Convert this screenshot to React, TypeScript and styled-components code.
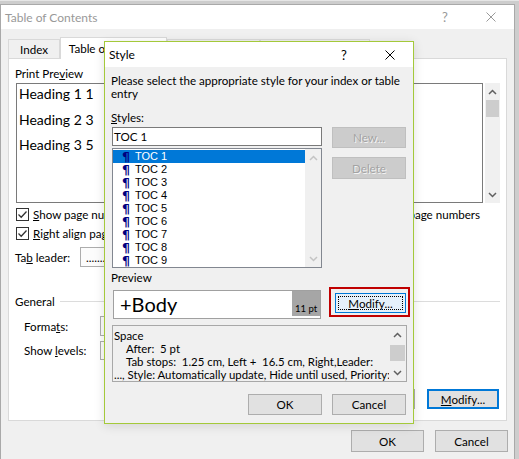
import React from "react";
import styled, { createGlobalStyle } from "styled-components";

const UI = `Lato, "Noto Sans", sans-serif`;

const GlobalStyle = createGlobalStyle`
  html, body { margin: 0; padding: 0; }
  body {
    font-family: ${UI};
    font-size: 11.6px;
    color: #000;
    background: #cfcfcf;
  }
  u { text-decoration-thickness: 1px; text-underline-offset: 1px; }
`;

const Desktop = styled.div`
  position: relative;
  width: 519px;
  height: 459px;
  overflow: hidden;
  padding-top: 3px;
  box-sizing: border-box;
  background: #cdcdcd;
  border-top: 1px solid #e6e6e6;
`;

const Window = styled.div`
  width: 515px;
  height: 470px;
  box-sizing: border-box;
  border: 1px solid #a9a9a9;
  background: #f0f0f0;
  display: flex;
  flex-direction: column;
`;

const TitleBar = styled.div<{ $h: number }>`
  height: ${(p) => p.$h}px;
  flex-shrink: 0;
  background: #fff;
  display: flex;
  align-items: center;
`;

const TitleText = styled.div<{ $inactive?: boolean }>`
  flex: 1;
  padding-left: 4px;
  font-size: 12px;
  color: ${(p) => (p.$inactive ? "#999" : "#000")};
`;

const CaptionButton = styled.div<{ $inactive?: boolean }>`
  width: 46px;
  height: 100%;
  display: flex;
  align-items: center;
  justify-content: center;
  font-size: 13px;
  color: ${(p) => (p.$inactive ? "#999" : "#000")};
`;

const Body = styled.div`
  padding: 0 7px;
  display: flex;
  flex-direction: column;
`;

const TabStrip = styled.div`
  height: 29px;
  display: flex;
  align-items: flex-end;
`;

const Tab = styled.div<{ $selected?: boolean; $w: number }>`
  width: ${(p) => p.$w}px;
  height: ${(p) => (p.$selected ? 22 : 19)}px;
  box-sizing: border-box;
  border: 1px solid #d9d9d9;
  border-bottom: none;
  background: ${(p) => (p.$selected ? "#fff" : "#f0f0f0")};
  margin-bottom: ${(p) => (p.$selected ? -1 : 0)}px;
  position: relative;
  z-index: ${(p) => (p.$selected ? 1 : 0)};
  display: flex;
  align-items: center;
  justify-content: center;
  white-space: nowrap;
`;

const TabPanel = styled.div`
  height: 363px;
  box-sizing: border-box;
  background: #fff;
  border: 1px solid #d9d9d9;
  padding: 8px 6px 0 6px;
  display: flex;
  flex-direction: column;
`;

const PanelGrid = styled.div`
  display: grid;
  grid-template-columns: 236px 238px;
  column-gap: 11px;
`;

const Column = styled.div`
  display: flex;
  flex-direction: column;
`;

const Label = styled.div<{ $mt?: number; $ml?: number }>`
  line-height: 14px;
  height: 14px;
  white-space: nowrap;
  margin-top: ${(p) => p.$mt ?? 0}px;
  margin-left: ${(p) => p.$ml ?? 0}px;
`;

const PreviewFrame = styled.div`
  margin-top: 2px;
  margin-left: 1px;
  height: 120px;
  display: flex;
  gap: 2px;
`;

const PreviewBox = styled.div`
  flex: 1;
  border: 1px solid #7a7a7a;
  background: #fff;
  padding: 1px 0 0 2px;
  display: flex;
  flex-direction: column;
  gap: 8.5px;
`;

const HeadingLine = styled.div`
  font-family: Lato, "Open Sans", sans-serif;
  font-size: 14px;
  line-height: 17px;
  white-space: nowrap;
`;

const Track = styled.div<{ $w: number }>`
  width: ${(p) => p.$w}px;
  flex-shrink: 0;
  background: #f0f0f0;
  display: flex;
  flex-direction: column;
`;

const ArrowCell = styled.div`
  height: 17px;
  display: flex;
  align-items: center;
  justify-content: center;
`;

const Thumb = styled.div<{ $h: number; $mt: number }>`
  height: ${(p) => p.$h}px;
  margin-top: ${(p) => p.$mt}px;
  margin-left: 1px;
  margin-right: 1px;
  background: #cdcdcd;
`;

const TrackFill = styled.div`
  flex: 1;
  display: flex;
  flex-direction: column;
`;

const Chevron = ({ dir, color }: { dir: "up" | "down"; color: string }) => (
  <svg width="9" height="6" viewBox="0 0 9 6">
    <polyline
      points={dir === "up" ? "1,5 4.5,1.5 8,5" : "1,1 4.5,4.5 8,1"}
      fill="none"
      stroke={color}
      strokeWidth="1.5"
    />
  </svg>
);

const ScrollBar = ({
  w,
  thumb,
  disabled,
}: {
  w: number;
  thumb?: { top: number; h: number };
  disabled?: boolean;
}) => {
  const c = disabled ? "#c4c4c4" : "#606060";
  return (
    <Track $w={w}>
      <ArrowCell>
        <Chevron dir="up" color={c} />
      </ArrowCell>
      <TrackFill>{thumb && <Thumb $h={thumb.h} $mt={thumb.top} />}</TrackFill>
      <ArrowCell>
        <Chevron dir="down" color={c} />
      </ArrowCell>
    </Track>
  );
};

const CheckRow = styled.div<{ $mt: number; $end?: boolean }>`
  display: flex;
  align-items: center;
  gap: 4px;
  height: 13px;
  line-height: 13px;
  margin-top: ${(p) => p.$mt}px;
  margin-left: 1px;
  justify-content: ${(p) => (p.$end ? "flex-end" : "flex-start")};
  padding-right: ${(p) => (p.$end ? 20 : 0)}px;
  white-space: nowrap;
`;

const CheckBox = styled.span`
  width: 13px;
  height: 13px;
  box-sizing: border-box;
  border: 1px solid #333;
  background: #fff;
  display: inline-flex;
  align-items: center;
  justify-content: center;
  flex-shrink: 0;
`;

const Checked = () => (
  <CheckBox>
    <svg width="11" height="11" viewBox="0 0 11 11">
      <polyline points="1.5,5.5 4.2,8.2 9.5,2.5" fill="none" stroke="#333" strokeWidth="1.3" />
    </svg>
  </CheckBox>
);

const FieldRow = styled.div<{ $mt: number; $indent?: number; $h?: number }>`
  display: flex;
  align-items: center;
  margin-top: ${(p) => p.$mt}px;
  margin-left: ${(p) => p.$indent ?? 0}px;
  height: ${(p) => p.$h ?? 20}px;
  white-space: nowrap;
`;

const FieldLabel = styled.div<{ $w: number }>`
  width: ${(p) => p.$w}px;
  flex-shrink: 0;
`;

const SelectBox = styled.div<{ $w: number }>`
  width: ${(p) => p.$w}px;
  height: 100%;
  box-sizing: border-box;
  border: 1px solid #adadad;
  background: #fcfcfc;
  display: flex;
  align-items: center;
  justify-content: space-between;
  padding: 0 5px;
`;

const GroupHeader = styled.div`
  display: flex;
  align-items: center;
  gap: 5px;
  margin-top: 27px;
  height: 14px;
`;

const GroupRule = styled.div`
  flex: 1;
  height: 1px;
  background: #dcdcdc;
`;

const ButtonRow = styled.div<{ $mt: number; $gap: number; $mr?: number }>`
  display: flex;
  justify-content: flex-end;
  gap: ${(p) => p.$gap}px;
  margin-top: ${(p) => p.$mt}px;
  margin-right: ${(p) => p.$mr ?? 0}px;
`;

const Button = styled.div<{
  $w: number;
  $h: number;
  $variant?: "default" | "disabled" | "focused" | "hot";
}>`
  width: ${(p) => p.$w}px;
  height: ${(p) => p.$h}px;
  box-sizing: border-box;
  flex-shrink: 0;
  display: flex;
  align-items: center;
  justify-content: center;
  position: relative;
  white-space: nowrap;
  background: ${(p) =>
    p.$variant === "disabled" ? "#cccccc" : p.$variant === "hot" ? "#e5f1fb" : "#e1e1e1"};
  border: ${(p) =>
    p.$variant === "focused"
      ? "2px solid #0078d7"
      : p.$variant === "hot"
      ? "1px solid #0078d7"
      : p.$variant === "disabled"
      ? "1px solid #bfbfbf"
      : "1px solid #adadad"};
  color: ${(p) => (p.$variant === "disabled" ? "#a3a3a3" : "#000")};
  text-shadow: ${(p) => (p.$variant === "disabled" ? "1px 1px 0 #f4f4f4" : "none")};
`;

const FocusRing = styled.span`
  position: absolute;
  inset: 2px;
  border: 1px dotted #000;
`;

const Annotation = styled.span`
  position: absolute;
  left: -7px;
  top: -7px;
  right: -5px;
  bottom: -5px;
  border: 2px solid #c00000;
  pointer-events: none;
`;

/* ---------- Style dialog ---------- */

const StyleWindow = styled.div`
  position: absolute;
  z-index: 10;
  left: 104px;
  top: 40px;
  width: 310px;
  height: 383px;
  box-sizing: border-box;
  border: 1px solid #a4c93a;
  background: #f0f0f0;
  display: flex;
  flex-direction: column;
  box-shadow: 0 2px 10px rgba(0, 0, 0, 0.12);
`;

const StyleBody = styled.div`
  padding: 7px 7px 0 7px;
  display: flex;
  flex-direction: column;
`;

const Intro = styled.div`
  line-height: 13px;
  margin-left: -1px;
`;

const StylesRow = styled.div`
  display: flex;
  gap: 10px;
  margin-top: 2px;
`;

const StylesCol = styled.div`
  width: 210px;
  display: flex;
  flex-direction: column;
`;

const SideButtons = styled.div`
  display: flex;
  flex-direction: column;
  gap: 9px;
`;

const TextInput = styled.div`
  height: 19px;
  box-sizing: border-box;
  border: 1px solid #7a7a7a;
  background: #fff;
  display: flex;
  align-items: center;
  padding-left: 1px;
`;

const ListBox = styled.div`
  height: 120px;
  margin-top: 2px;
  box-sizing: border-box;
  border: 1px solid #828790;
  background: #fff;
  display: flex;
`;

const ListItems = styled.div`
  flex: 1;
  padding-top: 1px;
  display: flex;
  flex-direction: column;
`;

const ListItem = styled.div<{ $selected?: boolean }>`
  height: 13px;
  line-height: 13px;
  overflow: hidden;
  display: flex;
  align-items: center;
  gap: 4px;
  padding-left: 9px;
  font-family: "Liberation Sans", Arial, sans-serif;
  font-size: 11px;
  background: ${(p) => (p.$selected ? "#0078d7" : "transparent")};
  color: ${(p) => (p.$selected ? "#fff" : "#000")};
`;

const Pilcrow = styled.span`
  font-family: "DejaVu Sans", sans-serif;
  font-weight: bold;
  font-size: 12.5px;
  line-height: 13px;
  color: #000080;
  width: 9px;
`;

const PreviewRow = styled.div`
  display: flex;
  align-items: flex-start;
  margin-top: 5px;
`;

const StylePreview = styled.div`
  width: 208px;
  height: 29px;
  margin-left: 1px;
  box-sizing: border-box;
  border: 1px solid #a0a0a0;
  background: #fff;
  display: flex;
`;

const SampleText = styled.div`
  flex: 1;
  padding-left: 6px;
  font-family: Lato, "Open Sans", sans-serif;
  font-size: 20px;
  line-height: 27px;
`;

const SizeTag = styled.div`
  width: 28px;
  background: #a6a6a6;
  display: flex;
  align-items: flex-end;
  padding: 0 0 2px 3px;
  box-sizing: border-box;
  font-size: 9.5px;
  margin-bottom: 2px;
`;

const ModifySlot = styled.div`
  margin-left: 14px;
  margin-top: 3px;
`;

const Description = styled.div`
  margin-top: 6px;
  margin-right: -1px;
  height: 57px;
  box-sizing: border-box;
  border: 1px solid #a8a8a8;
  background: #f0f0f0;
  display: flex;
`;

const DescText = styled.div`
  flex: 1;
  padding: 3px 0 0 1px;
  font-size: 11.4px;
  line-height: 13px;
  white-space: nowrap;
  overflow: hidden;
`;

const DescLine = styled.div<{ $indent?: boolean }>`
  padding-left: ${(p) => (p.$indent ? 12 : 0)}px;
  white-space: pre;
`;

const CloseGlyph = ({ color }: { color: string }) => (
  <svg width="10" height="10" viewBox="0 0 10 10">
    <path d="M0.5 0.5 L9.5 9.5 M9.5 0.5 L0.5 9.5" stroke={color} strokeWidth="1" />
  </svg>
);

const tocs = ["TOC 1", "TOC 2", "TOC 3", "TOC 4", "TOC 5", "TOC 6", "TOC 7", "TOC 8", "TOC 9"];

const StyleDialog = () => (
  <StyleWindow>
    <TitleBar $h={25}>
      <TitleText>Style</TitleText>
      <CaptionButton>?</CaptionButton>
      <CaptionButton>
        <CloseGlyph color="#000" />
      </CaptionButton>
    </TitleBar>
    <StyleBody>
      <Intro>
        Please select the appropriate style for your index or table
        <br />
        entry
      </Intro>
      <Label $mt={11} $ml={-1}>
        <u>S</u>tyles:
      </Label>
      <StylesRow>
        <StylesCol>
          <TextInput>TOC 1</TextInput>
          <ListBox>
            <ListItems>
              {tocs.map((t, i) => (
                <ListItem key={t} $selected={i === 0}>
                  <Pilcrow>¶</Pilcrow>
                  <span>{t}</span>
                </ListItem>
              ))}
            </ListItems>
            <ScrollBar w={16} disabled />
          </ListBox>
        </StylesCol>
        <SideButtons>
          <Button $w={74} $h={21} $variant="disabled">
            New...
          </Button>
          <Button $w={74} $h={22} $variant="disabled">
            Delete
          </Button>
        </SideButtons>
      </StylesRow>
      <Label $mt={3} $ml={-1}>
        Preview
      </Label>
      <PreviewRow>
        <StylePreview>
          <SampleText>+Body</SampleText>
          <SizeTag>11 pt</SizeTag>
        </StylePreview>
        <ModifySlot>
          <Button $w={71} $h={20} $variant="hot">
            <FocusRing />
            <span>
              <u>M</u>odify...
            </span>
            <Annotation />
          </Button>
        </ModifySlot>
      </PreviewRow>
      <Description>
        <DescText>
          <DescLine>Space</DescLine>
          <DescLine $indent>After:  5 pt</DescLine>
          <DescLine $indent>Tab stops:  1.25 cm, Left +  16.5 cm, Right,Leader:</DescLine>
          <DescLine>..., Style: Automatically update, Hide until used, Priority:</DescLine>
        </DescText>
        <ScrollBar w={17} thumb={{ top: 2, h: 16 }} />
      </Description>
      <ButtonRow $mt={12} $gap={10}>
        <Button $w={74} $h={21}>
          OK
        </Button>
        <Button $w={74} $h={21}>
          Cancel
        </Button>
      </ButtonRow>
    </StyleBody>
  </StyleWindow>
);

export default function App() {
  return (
    <>
      <GlobalStyle />
      <Desktop>
        <Window>
          <TitleBar $h={24}>
            <TitleText $inactive>Table of Contents</TitleText>
            <CaptionButton $inactive>?</CaptionButton>
            <CaptionButton $inactive>
              <CloseGlyph color="#999" />
            </CaptionButton>
          </TitleBar>
          <Body>
            <TabStrip>
              <Tab $w={52}>Index</Tab>
              <Tab $w={107} $selected>
                Table of Contents
              </Tab>
              <Tab $w={93}>Table of Figures</Tab>
              <Tab $w={110}>Table of Authorities</Tab>
            </TabStrip>
            <TabPanel>
              <PanelGrid>
                <Column>
                  <Label>
                    Print Pre<u>v</u>iew
                  </Label>
                  <PreviewFrame>
                    <PreviewBox>
                      <HeadingLine>Heading 1 1</HeadingLine>
                      <HeadingLine>Heading 2 3</HeadingLine>
                      <HeadingLine>Heading 3 5</HeadingLine>
                    </PreviewBox>
                    <ScrollBar w={15} thumb={{ top: 0, h: 17 }} />
                  </PreviewFrame>
                  <CheckRow $mt={5}>
                    <Checked />
                    <span>
                      <u>S</u>how page numbers
                    </span>
                  </CheckRow>
                  <CheckRow $mt={6}>
                    <Checked />
                    <span>
                      <u>R</u>ight align page numbers
                    </span>
                  </CheckRow>
                  <FieldRow $mt={7}>
                    <FieldLabel $w={65}>
                      Ta<u>b</u> leader:
                    </FieldLabel>
                    <SelectBox $w={130}>
                      <span>.......</span>
                      <Chevron dir="down" color="#333" />
                    </SelectBox>
                  </FieldRow>
                </Column>
                <Column>
                  <Label>Web Preview</Label>
                  <PreviewFrame>
                    <PreviewBox>
                      <HeadingLine>Heading 1</HeadingLine>
                    </PreviewBox>
                    <ScrollBar w={15} thumb={{ top: 0, h: 17 }} />
                  </PreviewFrame>
                  <CheckRow $mt={5} $end>
                    <Checked />
                    <span>
                      Use <u>h</u>yperlinks instead of page numbers
                    </span>
                  </CheckRow>
                </Column>
              </PanelGrid>
              <GroupHeader>
                <span>General</span>
                <GroupRule />
              </GroupHeader>
              <FieldRow $mt={8} $indent={9}>
                <FieldLabel $w={76}>
                  Forma<u>t</u>s:
                </FieldLabel>
                <SelectBox $w={120}>
                  <span>From template</span>
                  <Chevron dir="down" color="#333" />
                </SelectBox>
              </FieldRow>
              <FieldRow $mt={5} $indent={9} $h={19}>
                <FieldLabel $w={76}>
                  Show <u>l</u>evels:
                </FieldLabel>
                <SelectBox $w={40}>
                  <span>3</span>
                </SelectBox>
              </FieldRow>
              <ButtonRow $mt={29} $gap={12} $mr={1}>
                <Button $w={74} $h={20} />
                <Button $w={72} $h={20} $variant="focused">
                  <span>
                    <u>M</u>odify...
                  </span>
                </Button>
              </ButtonRow>
            </TabPanel>
            <ButtonRow $mt={9} $gap={11} $mr={-1}>
              <Button $w={73} $h={22}>
                OK
              </Button>
              <Button $w={73} $h={22}>
                Cancel
              </Button>
            </ButtonRow>
          </Body>
        </Window>
        <StyleDialog />
      </Desktop>
    </>
  );
}
